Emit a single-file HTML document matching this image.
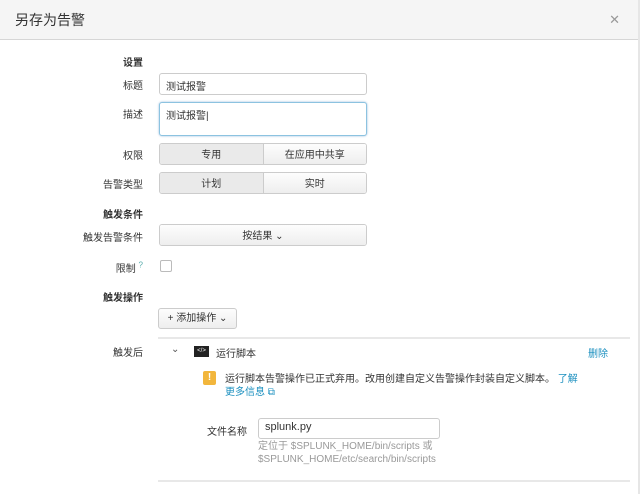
<!DOCTYPE html>
<html><head><meta charset="utf-8"><style>
*{box-sizing:border-box;margin:0;padding:0}
body{width:640px;height:494px;background:#fff;font-family:"Liberation Sans","Noto Sans CJK SC",sans-serif;font-size:10px;color:#333;position:relative;overflow:hidden}
.hd{position:absolute;left:0;top:0;width:638px;height:40px;background:#f5f5f5;border-bottom:1px solid #d6d6d6}
.hd h1{position:absolute;left:15px;top:10px;font-size:14px;font-weight:normal;color:#333}
.x{position:absolute;right:18px;top:12px;font-size:13px;color:#999}
.rb{position:absolute;right:0;top:0;width:2px;height:494px;background:#e6e6e6}
.lb{position:absolute;text-align:right;width:120px;left:23px}
.in{position:absolute;border:1px solid #ccc;border-radius:3px;background:#fff;padding:4px 6px;font-size:10px}
.seg{position:absolute;left:159px;width:208px;height:22px;display:flex;border:1px solid #ccc;border-radius:3px;overflow:hidden}
.seg div{flex:1;text-align:center;line-height:21px;padding-top:1px;background:linear-gradient(#fdfdfd,#eee)}
.seg div+div{border-left:1px solid #ccc}
.seg .on{background:#eaeaea}
.bold{font-weight:bold}
</style></head><body>
<div class="hd"><h1>另存为告警</h1><span class="x">✕</span></div>
<div class="rb"></div>
<div class="lb bold" style="top:54px">设置</div>
<div class="lb" style="top:77px">标题</div>
<div class="in" style="left:159px;top:73px;width:208px;height:22px">测试报警</div>
<div class="lb" style="top:106px">描述</div>
<div class="in" style="left:159px;top:102px;width:208px;height:34px;border-color:#8cc3e0;box-shadow:0 0 2px #9bd">测试报警|</div>
<div class="lb" style="top:147px">权限</div>
<div class="seg" style="top:143px"><div class="on">专用</div><div>在应用中共享</div></div>
<div class="lb" style="top:176px">告警类型</div>
<div class="seg" style="top:172px"><div class="on">计划</div><div>实时</div></div>
<div class="lb bold" style="top:206px">触发条件</div>
<div class="lb" style="top:229px">触发告警条件</div>
<div class="seg" style="top:224px"><div>按结果 ⌄</div></div>
<div class="lb" style="top:260px">限制 <sup style="color:#5aa;font-size:8px">?</sup></div>
<div style="position:absolute;left:160px;top:260px;width:12px;height:12px;border:1px solid #bbb;border-radius:2px"></div>
<div class="lb bold" style="top:289px">触发操作</div>
<div style="position:absolute;left:158px;top:308px;width:79px;height:21px;border:1px solid #ccc;border-radius:3px;background:linear-gradient(#fdfdfd,#eee);text-align:center;line-height:19px">+ 添加操作 ⌄</div>
<div style="position:absolute;left:158px;top:337px;width:472px;height:145px;background:#fff;border-top:2px solid #e8e8e8;border-bottom:2px solid #e8e8e8"></div>
<div class="lb" style="top:344px">触发后</div>
<div style="position:absolute;left:171px;top:344px;color:#555">⌄</div>
<div style="position:absolute;left:194px;top:346px;width:15px;height:11px;background:#222;color:#fff;font-size:6px;line-height:11px;text-align:center">&lt;/&gt;</div>
<div style="position:absolute;left:216px;top:345px">运行脚本</div>
<div style="position:absolute;left:588px;top:345px;color:#1a8fbf">删除</div>
<div style="position:absolute;left:203px;top:371px;width:13px;height:14px;background:#f2b63c;border-radius:2px;color:#fff;font-weight:bold;text-align:center;line-height:14px">!</div>
<div style="position:absolute;left:225px;top:373px;width:358px;line-height:13px">运行脚本告警操作已正式弃用。改用创建自定义告警操作封装自定义脚本。 <span style="color:#1a8fbf">了解更多信息 ⧉</span></div>
<div style="position:absolute;left:207px;top:423px">文件名称</div>
<div class="in" style="left:258px;top:418px;width:182px;height:21px;font-size:11px;padding-top:2px">splunk.py</div>
<div style="position:absolute;left:258px;top:440px;color:#999;line-height:13px">定位于 $SPLUNK_HOME/bin/scripts 或<br>$SPLUNK_HOME/etc/search/bin/scripts</div>
</body></html>
